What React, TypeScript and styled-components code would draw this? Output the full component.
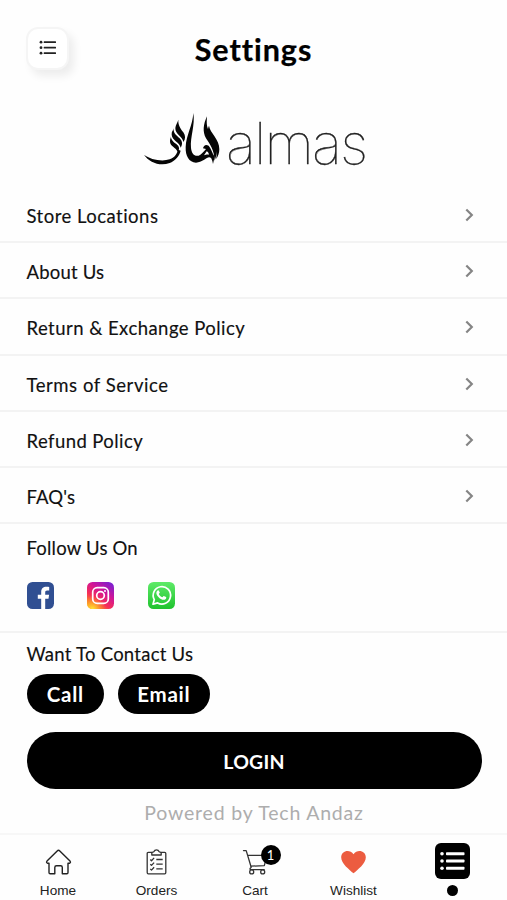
import React from "react";
import styled, { createGlobalStyle } from "styled-components";

const GlobalStyle = createGlobalStyle`
  * { box-sizing: border-box; }
  body { margin: 0; background: #fefefe; color: #111; font-family: Lato, sans-serif; }
  button { font: inherit; border: 0; padding: 0; cursor: pointer; }
`;

const Screen = styled.main`
  width: 100%;
  max-width: 507px;
  height: 900px;
  display: flex;
  flex-direction: column;
  overflow: hidden;
  background: #fefefe;
`;

const Header = styled.header`
  height: 96px;
  flex: none;
  display: grid;
  grid-template-columns: 43px 1fr 43px;
  align-items: center;
  padding: 0 26px;
`;

const MenuButton = styled.button`
  width: 43px;
  height: 43px;
  display: grid;
  place-items: center;
  border-radius: 12px;
  background: #fff;
  border: 2px solid #f5f5f5;
  box-shadow: 5px 6px 9px rgba(0, 0, 0, 0.07);
`;

const Title = styled.h1`
  margin: 2px 0 0;
  text-align: center;
  font-size: 30.5px;
  line-height: 36px;
  font-weight: 700;
  letter-spacing: 0.95px;
  -webkit-text-stroke: 0.25px #000;
  color: #000;
`;

const Brand = styled.div`
  height: 91px;
  flex: none;
  display: flex;
  padding: 14px 0 0 142px;
`;

const BrandMark = styled.svg`
  width: 82px;
  height: 60px;
  flex: none;
`;

const BrandName = styled.span`
  margin-left: 2px;
  font: 100 57px/60px Inter, sans-serif;
  letter-spacing: -1.9px;
  -webkit-text-stroke: 0.3px #222;
  color: #222;
  padding-top: 4px;
`;

const Menu = styled.nav`
  flex: none;
  display: grid;
  grid-template-rows: repeat(6, 56.2px);
`;

const MenuRow = styled.a`
  display: flex;
  justify-content: space-between;
  align-items: center;
  padding: 4px 32px 0 26.5px;
  border-bottom: 2px solid #f3f3f3;
`;

const Label = styled.span<{ $track?: number }>`
  font-size: 18.5px;
  line-height: 24px;
  letter-spacing: ${(p) => p.$track ?? 0.5}px;
  -webkit-text-stroke: 0.15px #111;
  white-space: nowrap;
`;

const Chevron = styled.svg`
  width: 12px;
  height: 16px;
  margin-top: -2px;
`;

const Social = styled.section`
  height: 109px;
  flex: none;
  padding: 12px 26.5px 0;
  border-bottom: 2px solid #f3f3f3;
`;

const SocialLinks = styled.div`
  display: flex;
  gap: 33.5px;
  margin-top: 22px;
  svg { display: block; width: 27px; height: 27px; }
`;

const Contact = styled.section`
  padding: 9px 25.5px 0 26.5px;
  flex: 1;
  display: flex;
  flex-direction: column;
`;

const Actions = styled.div`
  display: flex;
  gap: 13.5px;
  margin-top: 8px;
`;

const Pill = styled.button<{ $width: number }>`
  width: ${(p) => p.$width}px;
  height: 39.5px;
  border-radius: 20px;
  background: #000;
  color: #fff;
  font-weight: 700;
  font-size: 20.5px;
  letter-spacing: 0.75px;
`;

const LoginButton = styled.button`
  height: 57.5px;
  flex: none;
  margin-top: 18px;
  border-radius: 29px;
  background: #000;
  color: #fff;
  font-weight: 700;
  font-size: 19.5px;
  letter-spacing: 0.2px;
  padding-top: 2px;
`;

const Credit = styled.p`
  margin: 11px 0 0;
  text-align: center;
  font-size: 19.5px;
  line-height: 26px;
  letter-spacing: 0.8px;
  color: #adadad;
`;

const TabBar = styled.nav`
  height: 67px;
  flex: none;
  display: grid;
  grid-template-columns: repeat(5, 98.5px);
  padding-left: 8.75px;
  border-top: 2px solid #f7f7f7;
`;

const Tab = styled.a`
  display: flex;
  flex-direction: column;
  align-items: center;
  font: 13.6px/16px "Liberation Sans", sans-serif;
  color: #222;
  padding-top: 14px;
`;

const TabIcon = styled.span`
  position: relative;
  height: 27px;
  margin-bottom: 7px;
  svg { display: block; }
`;

const Badge = styled.span`
  position: absolute;
  left: 19px;
  top: -4px;
  width: 20px;
  height: 20px;
  border-radius: 50%;
  display: grid;
  place-items: center;
  background: #000;
  color: #fff;
  font: 13px/20px Lato, sans-serif;
`;

const ActiveTab = styled(Tab)`
  padding-top: 8px;
`;

const ActiveTile = styled.span`
  width: 35px;
  height: 36px;
  border-radius: 6px;
  background: #000;
  display: grid;
  place-items: center;
`;

const ActiveDot = styled.span`
  width: 11px;
  height: 11px;
  margin-top: 6px;
  border-radius: 50%;
  background: #000;
`;

const ListIcon = () => (
  <svg width="18" height="16" viewBox="0 0 18 16" fill="#222">
    {[2.2, 7.7, 13.2].map((y) => (
      <g key={y}>
        <circle cx="2" cy={y} r="1.4" />
        <rect x="4.7" y={y - 0.9} width="12.3" height="1.8" rx="0.5" />
      </g>
    ))}
  </svg>
);

const Calligraphy = () => (
  <BrandMark viewBox="18 15 246 180" fill="#050505">
    <path d="M24 149C43 163 76 171 101 163C118 156 122 146 127 134L134 137C129 155 117 167 101 174C72 185 39 172 24 149Z" />
    <path d="M127 44C126 60 133 70 142 82C149 92 149 103 142 111C140 94 117 88 118 69C119 59 125 53 127 44Z" />
    <path d="M113 70C111 84 121 91 131 100C140 109 140 119 134 128C132 112 108 106 107 89C106 80 112 76 113 70Z" />
    <path d="M105 93C104 104 112 111 121 117C130 124 132 132 125 141C121 127 101 125 102 108C102 101 105 98 105 93Z" />
    <path d="M172 24C178 60 162 96 165 129C167 146 175 155 188 152C197 149 203 139 210 132L201 130C203 121 209 117 218 122C226 130 228 145 236 155L231 177C229 165 226 156 219 157C206 161 199 172 180 173C159 172 148 153 149 126C150 91 170 62 172 24ZM212 139L204 151C210 149 214 147 219 149C218 144 216 140 212 139Z" fillRule="evenodd" />
    <path d="M213 34C212 50 211 60 217 75C225 94 238 108 241 127C244 143 240 156 236 167C235 136 222 118 210 100C199 80 202 58 213 34Z" />
    <path d="M219 62C222 84 251 103 250 133C250 145 246 153 241 162C247 129 222 106 217 86C214 76 216 69 219 62Z" />
  </BrandMark>
);

const Facebook = () => (
  <svg viewBox="0 0 27 27">
    <rect width="27" height="27" rx="5.5" fill="#304f92" />
    <path fill="#fff" d="M14.2 27V16.8h-3.4v-4h3.4V10c0-3.7 2-5.3 5.2-5.3 1.3 0 2.2.1 2.8.2v3.6h-2c-1.6 0-2 .8-2 2v2.3h3.9l-.6 4h-3.3V27z" />
  </svg>
);

const Instagram = () => (
  <svg viewBox="0 0 27 27">
    <defs>
      <linearGradient id="igBase" x1=".15" y1="1" x2=".85" y2="0">
        <stop stopColor="#ff9d19" />
        <stop offset=".35" stopColor="#f52e58" />
        <stop offset=".65" stopColor="#cf1598" />
        <stop offset="1" stopColor="#7a20d1" />
      </linearGradient>
      <radialGradient id="igGlow" cx=".2" cy="1" r=".5">
        <stop stopColor="#ffe536" />
        <stop offset="1" stopColor="#ff9d19" stopOpacity="0" />
      </radialGradient>
    </defs>
    <rect width="27" height="27" rx="5.5" fill="url(#igBase)" />
    <rect width="27" height="27" rx="5.5" fill="url(#igGlow)" />
    <g fill="none" stroke="#fff" strokeWidth="1.7">
      <rect x="5.7" y="5.7" width="15.6" height="15.6" rx="4.4" />
      <circle cx="13.5" cy="13.5" r="3.8" />
    </g>
    <circle cx="18" cy="9" r="1" fill="#fff" />
  </svg>
);

const WhatsApp = () => (
  <svg viewBox="0 0 27 27">
    <defs>
      <linearGradient id="waBase" x1="0" y1="0" x2="0" y2="1">
        <stop stopColor="#5eea68" />
        <stop offset="1" stopColor="#1fc32e" />
      </linearGradient>
    </defs>
    <rect width="27" height="27" rx="5.5" fill="url(#waBase)" />
    <path d="M5 22.2l1.3-4.6a8.7 8.7 0 1 1 3.3 3.3z" fill="none" stroke="#fff" strokeWidth="1.7" strokeLinejoin="round" />
    <path d="M10.8 8.8c-.4-.8-1.2-.5-1.7.1-2.3 2.6 1.3 6.7 3.8 8.1 2.6 1.6 5.4.8 5.4-1.6 0-.4-2.1-1.5-2.6-1.5-.6 0-.9 1.4-1.5 1.3-1.2-.4-3-2.1-3.4-3.3-.1-.5 1-1 1-1.5z" fill="#fff" />
  </svg>
);

const HomeIcon = () => (
  <svg width="27" height="27" viewBox="0 0 27 27" fill="none" stroke="#222" strokeWidth="1.4" strokeLinejoin="round" strokeLinecap="round">
    <path d="M13.5 1.3Q14.2 1.3 14.8 1.9L25 12.1Q26.2 13.6 24.4 14.3H23V23.5Q23 24.7 21.8 24.7H17.3V18.5Q17.3 16.8 15.7 16.8H11.5Q9.8 16.8 9.8 18.5V24.7H5.2Q4 24.7 4 23.5V14.3H2.7Q.8 13.6 2 12.1L12.2 1.9Q12.8 1.3 13.5 1.3Z" />
  </svg>
);

const OrdersIcon = () => (
  <svg width="21" height="27" viewBox="0 0 21 27" fill="none" stroke="#333" strokeWidth="1.3" strokeLinejoin="round">
    <path d="M6 3.4H2.3Q1.2 3.4 1.2 4.6V23.6Q1.2 24.8 2.3 24.8H18.7Q19.8 24.8 19.8 23.6V4.6Q19.8 3.4 18.7 3.4H15" />
    <path d="M5.8 6V4.2Q6 2.8 7.8 2.8Q8.6.9 10.5.9T13.2 2.8Q15 2.8 15.2 4.2V6Z" />
    {[10.5, 15.2, 19.9].map((y) => (
      <path key={y} d={`M4.3 ${y}l1.2 1.2 2.6-2.8M10.3 ${y}H16.7`} />
    ))}
  </svg>
);

const CartIcon = () => (
  <svg width="27" height="27" viewBox="0 0 27 27" fill="none" stroke="#333" strokeWidth="1.3" strokeLinejoin="round" strokeLinecap="round">
    <path d="M1.5 1.6H4.2L9.2 18.2M5.6 6.3H25L22.3 16.6L8.7 17.2M9.2 18.2Q6.5 20.4 9.4 20.7H22.2" />
    <circle cx="9.7" cy="22.9" r="2" />
    <circle cx="20.7" cy="22.9" r="2" />
  </svg>
);

const HeartIcon = () => (
  <svg width="27" height="27" viewBox="0 0 27 27">
    <path fill="#ec5c40" d="M13.5 24.3C9.5 20.5 1.2 14.7 1.2 8.4C1.2 1.7 9.6-.3 13.5 5.2C17.4-.3 25.8 1.7 25.8 8.4C25.8 14.7 17.5 20.5 13.5 24.3Z" />
  </svg>
);

const ActiveListIcon = () => (
  <svg width="27" height="22" viewBox="0 0 27 22" fill="#fff">
    {[3.7, 11, 18.3].map((y) => (
      <g key={y}>
        <circle cx="3" cy={y} r="1.8" />
        <rect x="7" y={y - 1.5} width="18.5" height="3" rx="0.8" />
      </g>
    ))}
  </svg>
);

const links = [
  { label: "Store Locations", track: 0.48 },
  { label: "About Us", track: 0.2 },
  { label: "Return & Exchange Policy", track: 0.46 },
  { label: "Terms of Service", track: 0.55 },
  { label: "Refund Policy", track: 0.42 },
  { label: "FAQ's", track: 0.1 },
];

export default function App() {
  return (
    <Screen>
      <GlobalStyle />
      <Header>
        <MenuButton aria-label="Menu"><ListIcon /></MenuButton>
        <Title>Settings</Title>
      </Header>
      <Brand>
        <Calligraphy />
        <BrandName>almas</BrandName>
      </Brand>
      <Menu>
        {links.map(({ label, track }) => (
          <MenuRow key={label}>
            <Label $track={track}>{label}</Label>
            <Chevron viewBox="0 0 12 16" fill="none" stroke="#858585" strokeWidth="2.2">
              <path d="M3.3 2.5L8.8 8L3.3 13.5" />
            </Chevron>
          </MenuRow>
        ))}
      </Menu>
      <Social>
        <Label $track={0.2}>Follow Us On</Label>
        <SocialLinks>
          <Facebook />
          <Instagram />
          <WhatsApp />
        </SocialLinks>
      </Social>
      <Contact>
        <Label $track={0.25}>Want To Contact Us</Label>
        <Actions>
          <Pill $width={77.5}>Call</Pill>
          <Pill $width={92.5}>Email</Pill>
        </Actions>
        <LoginButton>LOGIN</LoginButton>
        <Credit>Powered by Tech Andaz</Credit>
      </Contact>
      <TabBar>
        <Tab><TabIcon><HomeIcon /></TabIcon>Home</Tab>
        <Tab><TabIcon><OrdersIcon /></TabIcon>Orders</Tab>
        <Tab><TabIcon><CartIcon /><Badge>1</Badge></TabIcon>Cart</Tab>
        <Tab><TabIcon><HeartIcon /></TabIcon>Wishlist</Tab>
        <ActiveTab aria-label="Settings">
          <ActiveTile><ActiveListIcon /></ActiveTile>
          <ActiveDot />
        </ActiveTab>
      </TabBar>
    </Screen>
  );
}
